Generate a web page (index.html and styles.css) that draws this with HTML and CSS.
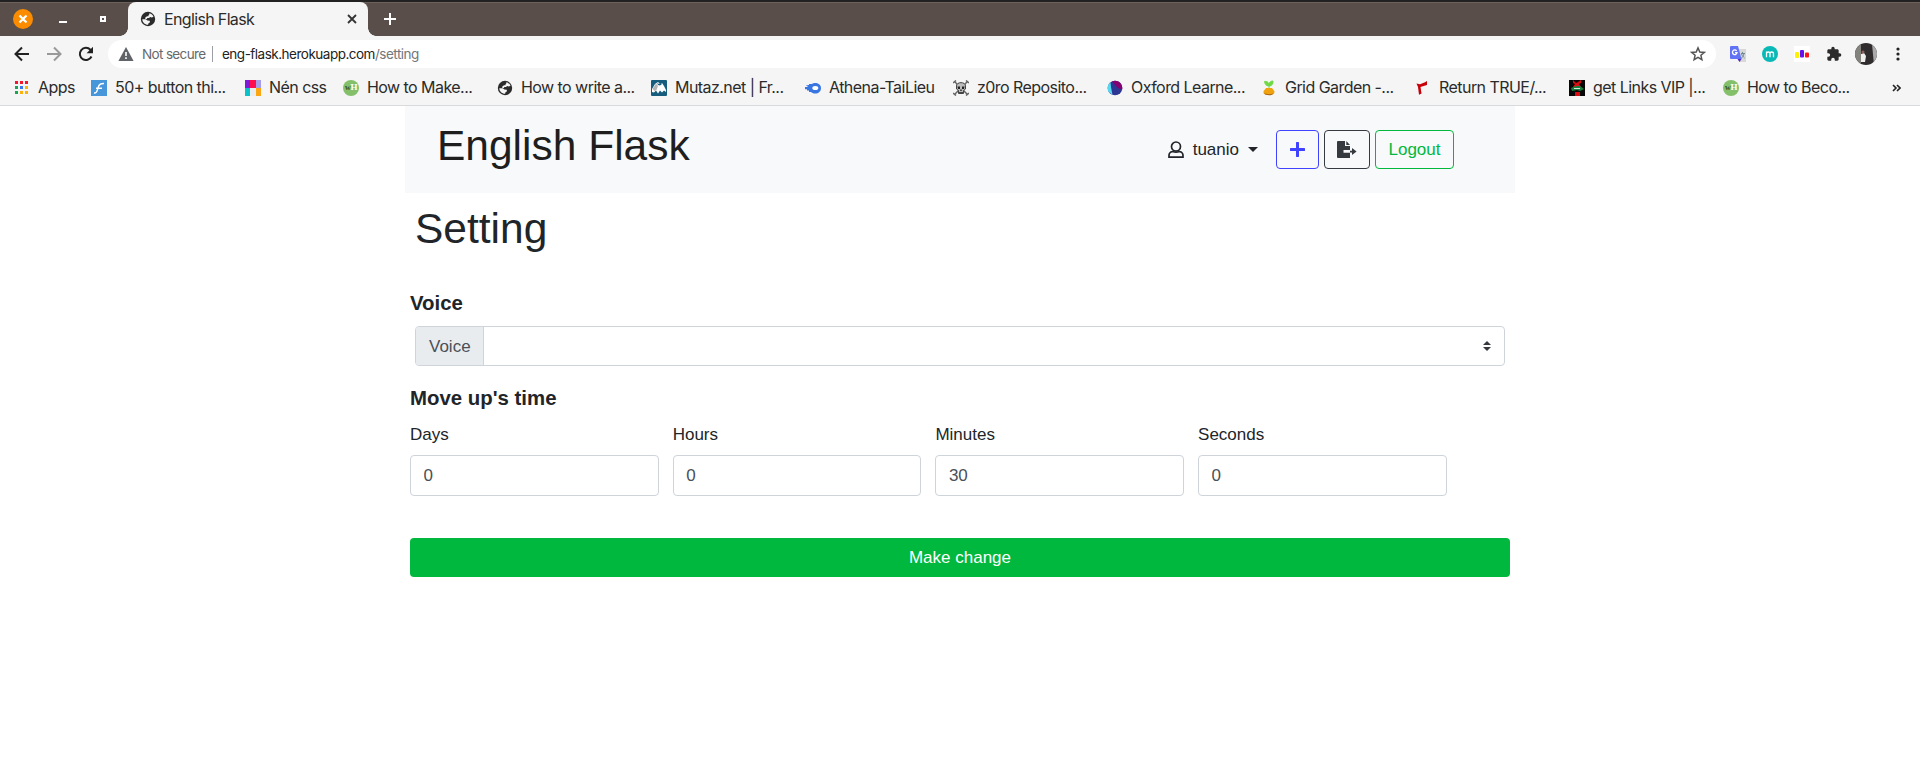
FILE: index.html
```html
<!DOCTYPE html>
<html lang="en">
<head>
<meta charset="utf-8">
<title>English Flask</title>
<link rel="stylesheet" href="styles.css">
</head>
<body>
<svg class="defs" aria-hidden="true">
  <symbol id="globe" viewBox="0 0 16 16"><circle cx="8" cy="8" r="7.200" fill="#2b2b2b"/><path d="M9.300 2.200c2 .4 3.600 1.800 4.200 3.600l-1.700.7-1.600-.5-1.200.9-1.600 0-.6 1H5.300V6.500L7 5.300h1.500V4.200l.8-.6zM2.300 8.200h3.500l1.600 1.300 2.300.2.300 1.600-1.500 1-.4 1.500c-3.200-.1-5.700-2.500-5.800-5.600z" fill="#f5f5f5"/></symbol>
</svg>
<header class="browser">
  <div class="tabstrip">
    <div class="window-buttons">
      <span class="close"><svg width="20" height="20" viewBox="0 0 20 20"><circle cx="10" cy="10" r="10" fill="#fb8c00"/><path d="M6.500 6.500l7 7M13.500 6.500l-7 7" stroke="#fff" stroke-width="2.200"/></svg></span>
      <span class="minimise"></span>
      <span class="maximise"></span>
    </div>
    <div class="tab">
      <svg width="16" height="16"><use href="#globe"/></svg>
      <span class="tab-title">English Flask</span>
      <svg width="10" height="10" viewBox="0 0 10 10"><path d="M1 1l8 8M9 1l-8 8" stroke="#333" stroke-width="1.800"/></svg>
    </div>
    <svg class="new-tab" width="12" height="12" viewBox="0 0 12 12"><path d="M6 0v12M0 6h12" stroke="#fff" stroke-width="2"/></svg>
  </div>
  <div class="toolbar">
    <div class="nav">
      <svg width="16" height="16" viewBox="0 0 16 16"><path d="M15 8H2M8 1.500L1.500 8 8 14.500" fill="none" stroke="#222" stroke-width="2"/></svg>
      <svg width="16" height="16" viewBox="0 0 16 16"><path d="M1 8h13M8 1.500L14.500 8 8 14.500" fill="none" stroke="#999" stroke-width="2"/></svg>
      <svg width="16" height="16" viewBox="0 0 16 16"><path d="M13.500 10.500A6.100 6.100 0 1 1 12.400 3.800L14 5.500" fill="none" stroke="#222" stroke-width="2"/><path d="M15 .8v6.400H8.600z" fill="#222"/></svg>
    </div>
    <div class="omnibox">
      <svg width="16" height="14" viewBox="0 0 16 14"><path d="M8 0l7.600 14H.4z" fill="#606367"/><path d="M8 5v4M8 10.300v1.700" stroke="#fff" stroke-width="1.600"/></svg>
      <span class="security">Not secure</span>
      <span class="divider"></span>
      <span class="url">eng-flask.herokuapp.com<span>/setting</span></span>
      <svg class="star" width="16" height="16" viewBox="0 0 16 16"><path d="M8 1.900l1.800 4.100 4.500.4-3.400 2.900 1 4.400L8 11.400l-3.900 2.300 1-4.400L1.700 6.400l4.500-.4z" fill="none" stroke="#555" stroke-width="1.500"/></svg>
    </div>
    <div class="extensions">
      <svg width="16" height="16" viewBox="0 0 16 16"><path d="M7 3h9v13H9z" fill="#d8d8d8"/><path d="M11 7.500h4M12.500 6v1.500M14 7.500c-.5 2.500-1.500 4-3 5M11.500 8c.8 2 2 3 3 4" stroke="#6d8b98" fill="none"/><path d="M1 0h7l3.500 13H1a1 1 0 0 1-1-1V1a1 1 0 0 1 1-1z" fill="#6272f5"/><path d="M7.500 13h4L9.500 16z" fill="#5125c9"/><path d="M6.600 4.900A2.300 2.300 0 1 0 7 6.700H5" stroke="#fff" fill="none" stroke-width="1.300"/></svg>
      <svg width="16" height="16" viewBox="0 0 16 16"><circle cx="8" cy="8" r="8" fill="#08b9b6"/><path d="M4.500 11.300V5.500M4.500 7.500c0-2 3.500-2 3.500 0v3.800M8 7.500c0-2 3.500-2 3.500 0v3.800" fill="none" stroke="#fff" stroke-width="1.300"/></svg>
      <svg width="16" height="16" viewBox="0 0 16 16"><path d="M0 0h16v16H0z" fill="#fff"/><rect x="1" y="6" width="4" height="6" rx="1" fill="#fff200"/><rect x="6" y="4" width="4" height="7.500" rx="1" fill="#6713ef"/><rect x="11" y="6.500" width="4" height="5" rx="1" fill="#ff1717"/></svg>
      <svg width="16" height="16" viewBox="0 0 24 24"><path d="M20.500 11H19V7c0-1.100-.9-2-2-2h-4V3.500a2.500 2.500 0 0 0-5 0V5H4c-1.100 0-2 .9-2 2v3.800h1.500a2.700 2.700 0 0 1 0 5.400H2V20c0 1.100.9 2 2 2h3.800v-1.500a2.700 2.700 0 0 1 5.400 0V22H17c1.100 0 2-.9 2-2v-4h1.500a2.500 2.500 0 0 0 0-5z" fill="#2b2b2b"/></svg>
      <svg width="22" height="22" viewBox="0 0 22 22"><clipPath id="avatar"><circle cx="11" cy="11" r="11"/></clipPath><g clip-path="url(#avatar)"><path d="M0 0h22v22H0z" fill="#302b2c"/><path d="M0 0h6v22H0z" fill="#83827d"/><path d="M17 1h5v21h-3z" fill="#aaa"/><path d="M6 11l3-1 2 3-1 6H6z" fill="#f1eeee"/><circle cx="8" cy="9" r="1.500" fill="#8a6259"/></g></svg>
      <svg width="4" height="14" viewBox="0 0 4 14"><g fill="#222"><circle cx="2" cy="2" r="1.600"/><circle cx="2" cy="7" r="1.600"/><circle cx="2" cy="12" r="1.600"/></g></svg>
    </div>
  </div>
  <nav class="bookmarks">
    <a class="apps"><svg width="16" height="16" viewBox="0 0 16 16"><path d="M1 1h3v3H1zM6 1h3v3H6zM11 1h3v3h-3z" fill="#f4142d"/><path d="M1 6h3v3H1zM1 11h3v3H1z" fill="#17a654"/><path d="M6 6h3v3H6z" fill="#3778f0"/><path d="M11 6h3v3h-3zM6 11h3v3H6zM11 11h3v3h-3z" fill="#fbb309"/></svg>Apps</a>
    <a><svg width="16" height="16" viewBox="0 0 16 16"><path d="M0 0h16v16H0z" fill="#4796da"/><path d="M3 13c3 .5 3-2 4-5s1.500-4.500 6-4.500M5 8.300h6" fill="none" stroke="#fff" stroke-width="1.400"/></svg>50+ button thi...</a>
    <a><svg width="16" height="16" viewBox="0 0 16 16"><path d="M0 0h5v8H0z" fill="#7f1bd8"/><path d="M5 0h6v8H5z" fill="#ff0b4e"/><path d="M11 0h5v8h-5z" fill="#a79ce8"/><path d="M0 8h5v8H0z" fill="#08c4c8"/><path d="M5 8h6v8H5z" fill="#e9edf0"/><path d="M11 8h5v8h-5z" fill="#fba713"/></svg>Nén css</a>
    <a><span class="wh"><i>w</i>H</span>How to Make...</a>
    <a><svg width="16" height="16"><use href="#globe"/></svg>How to write a...</a>
    <a><svg width="16" height="16" viewBox="0 0 16 16"><rect width="16" height="16" rx="1" fill="#165c7d"/><path d="M1 12V9l3-5 3-2 2 2 2-1 2 3 2 4v2l-2-1.500-2 2-2-2-2 3-2-3-2 2z" fill="#fff"/><path d="M1.500 9L5 3.500 7 6l-1.500 4-2 1z" fill="#b5b5b5"/><path d="M6 3l2 1 2-1 1 1-2 1.500L7 5z" fill="#165c7d"/></svg>Mutaz.net | Fr...</a>
    <a><svg width="16" height="16" viewBox="0 0 16 16"><path d="M4 4h3c2-2 9-1.500 9 4s-6 7-10 4H4v-1.500H2V9.300H0V7h2.500V5.500H1V5h3z" fill="#3a76e2"/><ellipse cx="10.300" cy="8" rx="3" ry="2" fill="#fff"/></svg>Athena-TaiLieu</a>
    <a><svg width="16" height="16" viewBox="0 0 16 16"><path d="M1.500 1.500l13 13M14.500 1.500l-13 13M0 3l3-2.500M13 .5L16 3M0 13l3 2.500M13 15.500l3-2.500" stroke="#666" stroke-width="1.500"/><path d="M3.500 6c0-4.500 9-4.500 9 0v3l-2 1.500v3h-5v-3L3.500 9z" fill="#bbb" stroke="#444"/><path d="M4.500 6.500H7V9H5zM9 6.500h2.500L11 9H9zM7.300 9.500h1.400V11H7.300zM6 12h4v.8H6z" fill="#222"/></svg>z0ro Reposito...</a>
    <a><svg width="16" height="16" viewBox="0 0 16 16"><circle cx="8" cy="8" r="7.300" fill="#2d3693"/><path d="M3.500 2.300C0 5-.3 9.500 2 12.200l3.500 2.700-1.500-8z" fill="#55d7ee"/><path d="M5 1.400C11-1 16 4 15.200 9.500L11 8z" fill="#850070"/></svg>Oxford Learne...</a>
    <a><svg width="16" height="16" viewBox="0 0 16 16"><path d="M8 9V5M8 6C5 6 4 4 3.500 1.500 7 1 8 3 8 6zM8 5c0-3 2-4 4-4 0 3-1 5-4 5z" fill="#6ed943" stroke="#6ed943"/><path d="M5 8h6l2.300 3c1 3-2 4-5.300 4s-6.500-1-5.300-4z" fill="#efa20e"/><path d="M3 13c2 1.500 8 1.500 10 0-1 3-9 3-10 0z" fill="#ad6812"/></svg>Grid Garden -...</a>
    <a><svg width="16" height="16" viewBox="0 0 16 16"><path d="M1.500 3.500l3.500.7 5-2 2-1.200v4L7 6.500 5.500 7l1 6.500-2.500 1.300L3 7z" fill="#c70009"/></svg>Return TRUE/...</a>
    <a><svg width="16" height="16" viewBox="0 0 16 16"><path d="M0 0h16v16H0z" fill="#080808"/><path d="M4 0l3 3 2-1 3-2v3l-2 1 2 3H4l2-3-2-1zM6 12h5v4H6z" fill="#db0c12"/><path d="M2 8l5-2h4l4 3-4 2-3-1-5 1z" fill="#18803d"/><path d="M5 8h6v1H5z" fill="#ddd"/></svg>get Links VIP |...</a>
    <a><span class="wh"><i>w</i>H</span>How to Beco...</a>
    <svg class="overflow" width="9" height="8" viewBox="0 0 9 8"><path d="M1 1l3 3-3 3M5 1l3 3-3 3" fill="none" stroke="#222" stroke-width="1.600"/></svg>
  </nav>
</header>
<main class="container">
  <div class="site-header">
    <h1>English Flask</h1>
    <div class="actions">
      <div class="user">
        <svg width="16" height="18" viewBox="0 0 16 18"><circle cx="8" cy="5.500" r="4.500"/><path d="M4.500 10.500C2 11 1 12.500 1 14.500v1.700h14v-1.700c0-2-1-3.500-3.500-4-2 .8-5 .8-7 0z"/></svg>
        <span>tuanio</span><i class="caret"></i>
      </div>
      <button class="btn add"><svg width="15" height="15" viewBox="0 0 15 15"><path d="M7.500 1v13M1 7.500h13" stroke="#3f43ff" stroke-width="3" stroke-linecap="round"/></svg></button>
      <button class="btn export"><svg width="20" height="17" viewBox="0 0 20 17"><path d="M1 0h7v5h5v4H6.500v2.800H13V17H1a1 1 0 0 1-1-1V1a1 1 0 0 1 1-1zM9.300 0L13 4H9.300zM13 9.700h2V7l4.600 3.500L15 14v-2.500h-2z" fill="#343a40"/></svg></button>
      <button class="btn logout">Logout</button>
    </div>
  </div>
  <h1 class="page-title">Setting</h1>
  <form class="settings">
    <h2>Voice</h2>
    <div class="voice-group">
      <span class="prefix">Voice</span>
      <span class="select"><svg width="8" height="10" viewBox="0 0 8 10"><path d="M4 0l4 4H0zM4 10l4-4H0z" fill="#343a40"/></svg></span>
    </div>
    <h2 class="time-title">Move up's time</h2>
    <div class="fields">
      <label>Days<input value="0"></label>
      <label>Hours<input value="0"></label>
      <label>Minutes<input value="30"></label>
      <label>Seconds<input value="0"></label>
    </div>
    <button type="button" class="submit">Make change</button>
  </form>
</main>
</body>
</html>
```
FILE: styles.css
```css
* { box-sizing: border-box; }
body { margin: 0; height: 761px; overflow: hidden; background: #fff; color: #212529; font: 17px/25px "Liberation Sans", Arial, sans-serif; }
svg { display: block; flex: none; }
h1, h2 { margin: 0; }
.defs { position: absolute; width: 0; height: 0; }

.browser { height: 106px; background: #f5f5f5; border-bottom: 1px solid #d9dadc; font-family: Inter, sans-serif; color: #2b2b2b; }
.tabstrip { height: 36px; display: flex; background: #594e49; border-top: 2px solid #222; box-shadow: inset 0 1px #6c615b; }
.window-buttons { width: 128px; display: flex; align-items: center; padding-left: 13px; }
.minimise { width: 8px; height: 2px; margin: 6px 0 0 26px; background: #fff; }
.maximise { width: 6px; height: 6px; margin-left: 33px; border: 2px solid #fff; }
.tab { position: relative; width: 240px; display: flex; align-items: center; padding: 0 11px 0 12px; background: #f5f5f5; border-radius: 8px 8px 0 0; }
.tab::before, .tab::after { content: ""; position: absolute; bottom: 0; width: 8px; height: 8px; }
.tab::before { right: 100%; background: radial-gradient(circle at 0 0, transparent 7.5px, #f5f5f5 8px); }
.tab::after { left: 100%; background: radial-gradient(circle at 100% 0, transparent 7.5px, #f5f5f5 8px); }
.tab-title { flex: 1; margin-left: 8px; font-size: 16px; letter-spacing: -.65px; }
.new-tab { margin: 11px 0 0 16px; }
.toolbar { height: 36px; display: flex; align-items: center; }
.nav { display: flex; gap: 16px; width: 108px; padding-left: 14px; }
.omnibox { width: 1608px; height: 28px; display: flex; align-items: center; padding: 0 10px; border-radius: 14px; background: #fff; font-size: 13.5px; }
.security { width: 63px; margin-left: 8px; color: #66696c; letter-spacing: -.65px; white-space: nowrap; }
.divider { width: 1px; height: 16px; margin: 0 9px 0 7px; background: #9c9fa2; }
.url { color: #222; letter-spacing: -.5px; }
.url span { color: #73767a; }
.star { margin-left: auto; }
.extensions { display: flex; align-items: center; margin-left: 14px; gap: 16px; }
.extensions svg:nth-child(5) { margin: 0 3px 0 -3px; }
.bookmarks { height: 32px; display: grid; grid-template-columns: 77px 154px 98px 154px 154px 154px 148px 154px 154px 154px 154px 154px 169px 9px; align-items: center; padding: 0 0 1px 14px; font-size: 16px; letter-spacing: -.55px; white-space: nowrap; }
.bookmarks a { display: flex; align-items: center; gap: 8px; }
.wh { flex: none; width: 16px; height: 16px; border-radius: 50%; background: #84c06a; color: #fff; text-align: center; font: 700 9px/15px "Liberation Serif", serif; letter-spacing: -.3px; }
.wh i { font-style: normal; font-size: 8px; color: #35502b; }

.container { width: 1110px; margin: 0 auto; }
.site-header { height: 87px; display: flex; justify-content: space-between; padding: 24px 61px 0 32px; background: #f8f9fb; }
h1 { font-size: 42.5px; line-height: 50px; font-weight: 400; }
.site-header h1 { margin-top: -9px; color: #1e1e1e; }
.actions { display: flex; gap: 5px; height: 39px; }
.user { display: flex; align-items: center; margin-right: 13px; }
.user svg { margin-right: 9px; fill: none; stroke: #212529; stroke-width: 1.700px; }
.caret { margin-left: 9px; border: 5px solid transparent; border-top-color: #212529; border-bottom: 0; }
.btn { height: 39px; display: flex; align-items: center; justify-content: center; padding: 0; border: 1px solid; border-radius: 4px; background: transparent; font: inherit; }
.add { width: 43px; color: #3f43ff; }
.export { width: 46px; color: #343a40; }
.logout { width: 79px; color: #00b83d; }
.page-title { margin: 11px 0 0 10px; }
.settings { padding: 36px 5px 0; }
h2 { font-size: 20.4px; line-height: 26px; }
.voice-group { height: 40px; display: flex; margin: 10px 5px 0; border: 1px solid #ced4da; border-radius: 4px; overflow: hidden; }
.prefix { width: 68px; padding: 7px 13px; border-right: 1px solid #ced4da; background: #e9ecef; color: #495057; }
.select { flex: 1; display: flex; align-items: center; justify-content: flex-end; padding-right: 13px; }
.time-title { margin-top: 19px; }
.fields { display: grid; grid-template-columns: repeat(4, 248.700px); gap: 14px; margin-top: 11px; }
.fields label { display: block; }
.fields input { display: block; width: 100%; height: 41px; margin-top: 8px; padding: 0 12.500px; border: 1px solid #ced4da; border-radius: 4px; color: #495057; background: #fff; font: inherit; }
.submit { display: block; width: 100%; height: 39px; margin-top: 42px; border: 0; border-radius: 4px; background: #00b83d; color: #fff; font: inherit; }
```
